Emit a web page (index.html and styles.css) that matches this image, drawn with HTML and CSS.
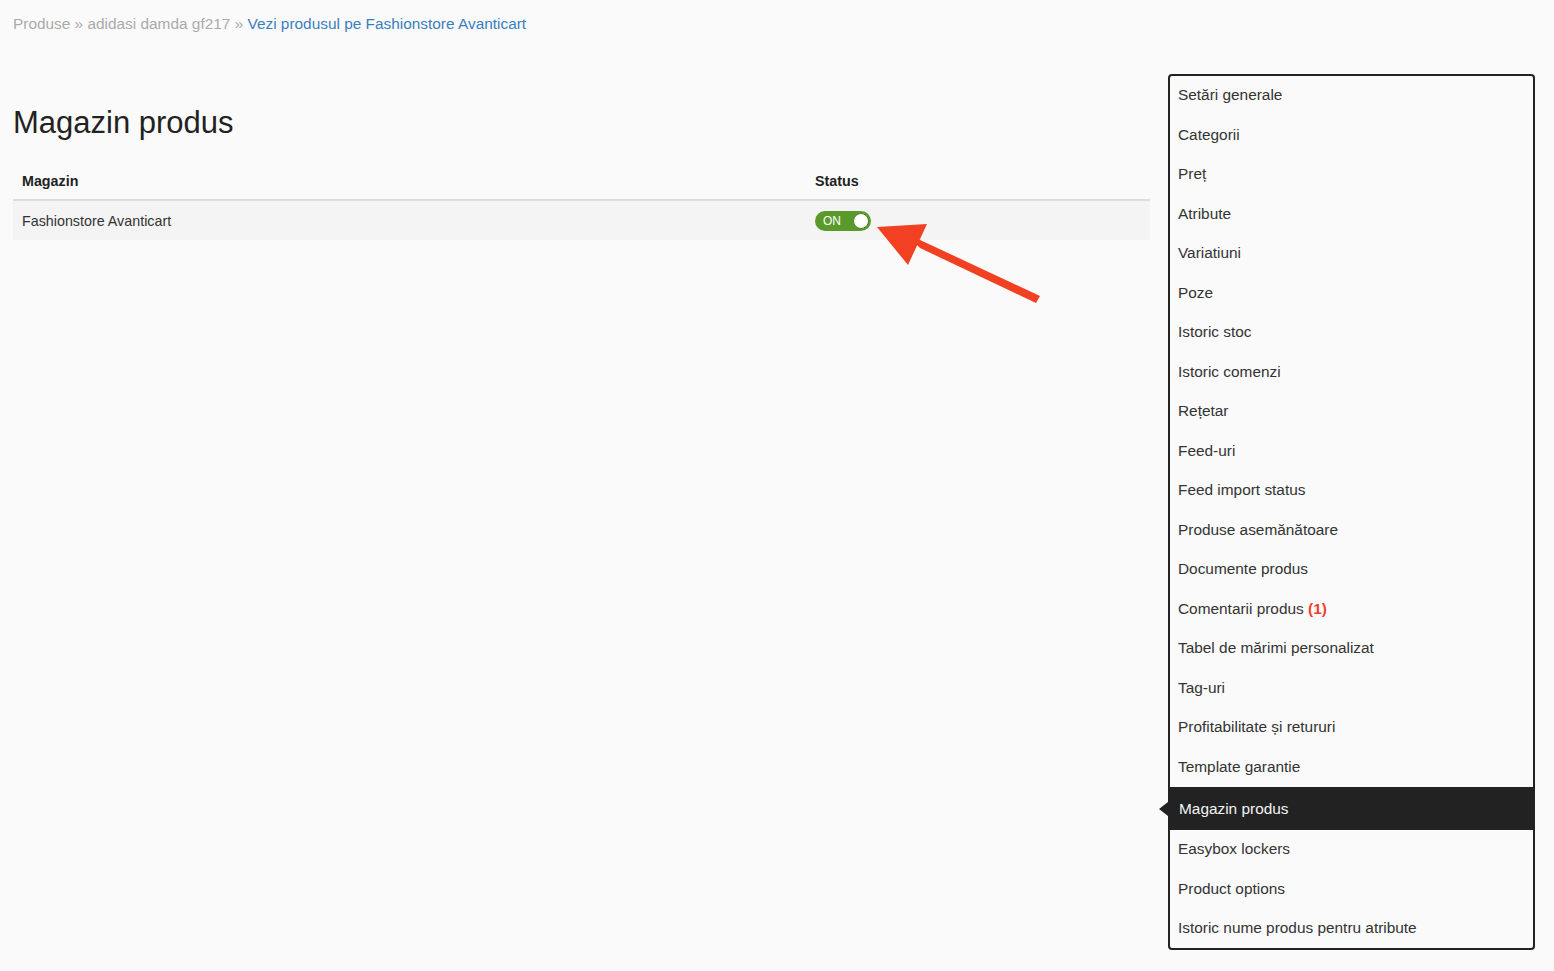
FILE: index.html
```html
<!DOCTYPE html>
<html lang="ro">
<head>
<meta charset="utf-8">
<title>Magazin produs</title>
<link rel="stylesheet" href="styles.css">
</head>
<body>
<div class="page">
  <main class="main">
    <div class="breadcrumb">
      <span class="crumb">Produse</span> <span class="sep">»</span>
      <span class="crumb">adidasi damda gf217</span> <span class="sep">»</span>
      <a class="crumb-link" href="#">Vezi produsul pe Fashionstore Avanticart</a>
    </div>
    <h1 class="title">Magazin produs</h1>
    <table class="stores">
      <thead>
        <tr><th class="col-store">Magazin</th><th>Status</th></tr>
      </thead>
      <tbody>
        <tr>
          <td>Fashionstore Avanticart</td>
          <td>
            <span class="toggle"><span class="toggle-label">ON</span><span class="knob"></span></span>
          </td>
        </tr>
      </tbody>
    </table>
    <svg class="annot-arrow" width="180" height="100" viewBox="860 210 180 100" aria-hidden="true">
      <polygon points="877,227 927,224 908,265" fill="#f24023"/>
      <polygon points="912,240 920,248 1036,303 1040,296 918,239" fill="#f24023"/>
    </svg>
  </main>
  <nav class="side">
    <ul class="menu">
      <li class="item">Setări generale</li>
      <li class="item">Categorii</li>
      <li class="item">Preț</li>
      <li class="item">Atribute</li>
      <li class="item">Variatiuni</li>
      <li class="item">Poze</li>
      <li class="item">Istoric stoc</li>
      <li class="item">Istoric comenzi</li>
      <li class="item">Rețetar</li>
      <li class="item">Feed-uri</li>
      <li class="item">Feed import status</li>
      <li class="item">Produse asemănătoare</li>
      <li class="item">Documente produs</li>
      <li class="item">Comentarii produs <span class="count">(1)</span></li>
      <li class="item">Tabel de mărimi personalizat</li>
      <li class="item">Tag-uri</li>
      <li class="item">Profitabilitate și retururi</li>
      <li class="item">Template garantie</li>
      <li class="item active">Magazin produs</li>
      <li class="item">Easybox lockers</li>
      <li class="item">Product options</li>
      <li class="item last">Istoric nume produs pentru atribute</li>
    </ul>
  </nav>
</div>
</body>
</html>
```

FILE: styles.css
```css
html, body {
  margin: 0;
  padding: 0;
  background: #fafafa;
}
body {
  font-family: "Liberation Sans", Arial, sans-serif;
  color: #333;
  width: 1554px;
  min-height: 971px;
  overflow: hidden;
}
.page {
  display: flex;
  gap: 18px;
  padding: 0 19px 0 13px;
}
.main {
  position: relative;
  flex: 1;
  min-width: 0;
}
.breadcrumb {
  margin-top: 14px;
  font-size: 15.4px;
  line-height: 20px;
  color: #aaa;
}
.crumb-link {
  color: #3a7ec0;
  text-decoration: none;
}
.title {
  margin: 72px 0 0;
  font-size: 31px;
  line-height: 34px;
  font-weight: normal;
  color: #222;
}
.stores {
  margin-top: 23px;
  width: 100%;
  border-collapse: collapse;
  font-size: 14.3px;
  line-height: 20px;
}
.stores th {
  text-align: left;
  font-weight: bold;
  padding: 8px 9px;
  border-bottom: 2px solid #ddd;
  color: #222;
}
.stores .col-store {
  width: 775px;
}
.stores td {
  padding: 10px 9px 9px;
  background: #f4f4f4;
  color: #333;
  vertical-align: middle;
}
.toggle {
  display: flex;
  align-items: center;
  justify-content: space-between;
  box-sizing: border-box;
  width: 56px;
  height: 20px;
  border-radius: 10px;
  background: #5a9a2b;
  padding: 0 2px 0 8px;
}
.toggle-label {
  color: #fff;
  font-size: 12px;
  line-height: 12px;
}
.knob {
  width: 14px;
  height: 14px;
  border-radius: 50%;
  background: #fff;
  border: 1px solid #4a8a20;
}
.annot-arrow {
  position: absolute;
  left: 847px;
  top: 210px;
}
.side {
  width: 367px;
  margin-top: 74px;
}
.menu {
  list-style: none;
  margin: 0;
  padding: 0;
  border: 2px solid #222;
  border-radius: 4px;
  font-size: 15.4px;
  line-height: 19.5px;
}
.item {
  position: relative;
  padding: 9px 8px 11px;
  color: #333;
}
.item.last {
  padding-bottom: 10px;
}
.count {
  color: #f0412a;
  font-weight: bold;
}
.item.active {
  padding: 11.5px 9px 12px;
  background: #222;
  color: #f4f4f4;
}
.item.active::before {
  content: "";
  position: absolute;
  left: -11px;
  top: 50%;
  margin-top: -7px;
  border-style: solid;
  border-width: 7px 9px 7px 0;
  border-color: transparent #222 transparent transparent;
}
```
